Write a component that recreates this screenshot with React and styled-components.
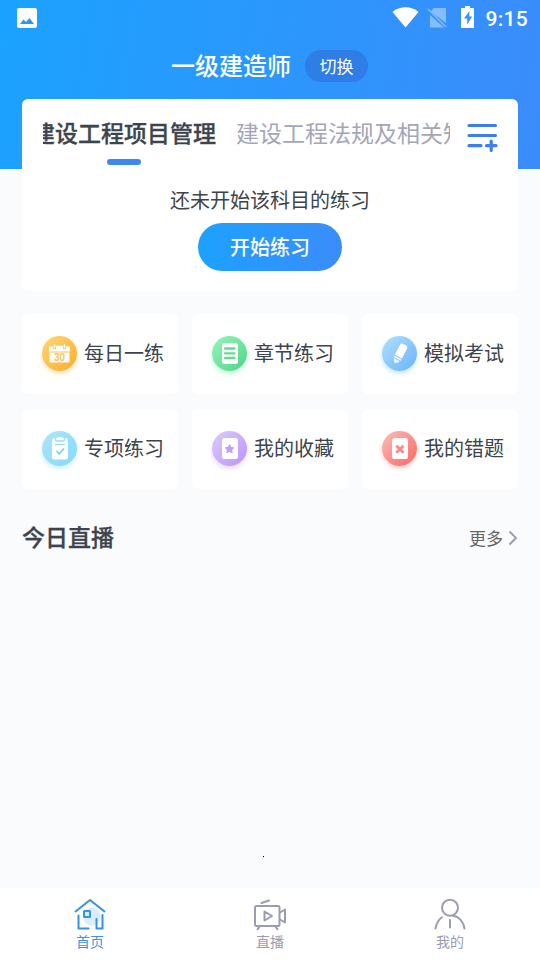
import React from "react";
import styled, { createGlobalStyle } from "styled-components";

const GlobalStyle = createGlobalStyle`
  * {
    box-sizing: border-box;
  }
  body {
    margin: 0;
    font-family: "Noto Sans CJK SC", sans-serif;
    color: #3d444d;
  }
  svg {
    display: block;
    flex-shrink: 0;
  }
`;

const Page = styled.div`
  position: relative;
  display: flex;
  flex-direction: column;
  width: 540px;
  height: 960px;
  overflow: hidden;
  background: linear-gradient(100deg, #1ba2ff 0%, #3b8cfb 100%) 0 0 / 100%
      169px no-repeat,
    #f9fbfd;
`;

const StatusBar = styled.div`
  display: flex;
  align-items: center;
  justify-content: space-between;
  height: 36px;
  padding: 0 12px 0 17px;
`;

const StatusIcons = styled.div`
  display: flex;
  align-items: center;
`;

const Clock = styled.span`
  margin-left: 11px;
  padding-top: 2px;
  font: 500 21px/24px Roboto, sans-serif;
  letter-spacing: 0.3px;
  color: #fff;
`;

const TitleRow = styled.div`
  display: flex;
  align-items: center;
  justify-content: center;
  gap: 14px;
  height: 60px;
  margin-bottom: 3px;
  padding-right: 1px;
`;

const Title = styled.h1`
  margin: 0;
  padding-bottom: 2px;
  font-size: 24px;
  line-height: 32px;
  font-weight: 500;
  color: #fff;
`;

const SwitchButton = styled.button`
  width: 63px;
  height: 32px;
  padding: 0;
  border: 0;
  border-radius: 16px;
  background: #2f7de6;
  font: inherit;
  font-size: 17px;
  line-height: 30px;
  color: #fff;
`;

const SubjectCard = styled.section`
  display: flex;
  flex-direction: column;
  align-items: center;
  height: 192px;
  margin: 0 22px;
  border-radius: 6px;
  background: #fff;
`;

const TabRow = styled.div`
  display: flex;
  align-items: flex-start;
  justify-content: space-between;
  align-self: stretch;
  padding: 16px 20px 0 21px;
`;

const TabScroller = styled.div`
  display: flex;
  gap: 20px;
  width: 407px;
  overflow: hidden;
`;

const Tab = styled.div`
  display: flex;
  flex: none;
  flex-direction: column;
  align-items: center;
  gap: 10px;
  font-size: 23px;
  line-height: 34px;
  font-weight: ${({ $active }) => ($active ? 500 : 400)};
  -webkit-text-stroke: ${({ $active }) => ($active ? "0.3px" : "0")};
  color: ${({ $active }) => ($active ? "#3d444d" : "#a4a6b8")};

  /* the list is scrolled a little to the left */
  &:first-child {
    margin-left: -11px;
  }
  &::after {
    content: "";
    width: 34px;
    height: 6px;
    border-radius: 3px;
    background: ${({ $active }) => ($active ? "#3c8af0" : "transparent")};
  }
`;

const MenuIcon = styled.svg`
  margin-top: 8px;
`;

const Hint = styled.p`
  margin: 20px 0 8px;
  font-size: 20px;
  line-height: 30px;
`;

const StartButton = styled.button`
  width: 144px;
  height: 48px;
  padding: 0;
  border: 0;
  border-radius: 24px;
  background: linear-gradient(100deg, #1ba2ff, #3b8cfb);
  font: inherit;
  font-size: 20px;
  line-height: 46px;
  font-weight: 500;
  color: #fff;
`;

const Grid = styled.div`
  display: grid;
  grid-template-columns: repeat(3, 156px);
  grid-auto-rows: 80px;
  gap: 15px 14px;
  padding: 23px 22px 0;
`;

const GridItem = styled.div`
  display: flex;
  align-items: center;
  gap: 7px;
  padding: 0 0 2px 20px;
  border-radius: 6px;
  background: #fff;
  font-size: 20px;
  line-height: 30px;
  white-space: nowrap;
`;

const GridLabel = styled.span`
  padding-bottom: 1px;
`;

const Bubble = styled.div`
  flex: none;
  width: 35px;
  height: 35px;
  border-radius: 50%;
  background: linear-gradient(
    135deg,
    ${({ $from }) => $from},
    ${({ $to }) => $to}
  );
  box-shadow: 0 3px 5px ${({ $glow }) => $glow};
`;

const SectionHead = styled.div`
  display: flex;
  align-items: center;
  justify-content: space-between;
  padding: 0 22px;
  margin-top: 28px;
`;

const SectionTitle = styled.h2`
  margin: 0;
  font-size: 23px;
  line-height: 38px;
  font-weight: 500;
  -webkit-text-stroke: 0.3px;
`;

const More = styled.div`
  display: flex;
  align-items: center;
  gap: 5px;
  padding-top: 3px;
  font-size: 17px;
  line-height: 26px;
  color: #666;
`;

const Dot = styled.span`
  position: absolute;
  left: 263px;
  top: 856px;
  width: 1px;
  height: 1px;
  background: #000;
`;

const TabBar = styled.nav`
  display: grid;
  grid-template-columns: repeat(3, 1fr);
  height: 72px;
  margin-top: auto;
  background: #fff;
`;

const TabBarItem = styled.div`
  display: flex;
  flex-direction: column;
  align-items: center;
  padding-top: 9px;
  font-size: 14px;
  line-height: 20px;
  color: ${({ $active }) => ($active ? "#3a94e8" : "#9a9cb2")};
`;

const shortcuts = [
  {
    label: "每日一练",
    from: "#ffd777",
    to: "#fbab2c",
    glow: "#ffe7ba",
    icon: (
      <>
        <path
          d="M7 10.500h4V13h3v-2.500h7V13h3v-2.500h4V15.500H7z M7.500 16.500h20V25a1.500 1.500 0 0 1-1.500 1.500H9A1.500 1.500 0 0 1 7.500 25z"
          fill="#fff"
        />
        <path
          d="M12.500 11.500V9M22.500 11.500V9M14.500 10.500h6"
          stroke="#fff"
          strokeWidth="1.500"
          strokeLinecap="round"
        />
        <text
          x="17.500"
          y="25.300"
          textAnchor="middle"
          fontFamily="Liberation Sans, sans-serif"
          fontSize="10"
          fontWeight="700"
          fill="#fdbf5b"
        >
          30
        </text>
      </>
    )
  },
  {
    label: "章节练习",
    from: "#98f5bb",
    to: "#4bd585",
    glow: "#c9f8da",
    icon: (
      <>
        <rect x="10" y="7" width="16" height="21" rx="2.500" fill="#fff" />
        <path
          d="M13 12.500h9.500M13 17.300h9.500M13 22h9.500"
          stroke="#62dc94"
          strokeWidth="2.300"
          strokeLinecap="round"
        />
      </>
    )
  },
  {
    label: "模拟考试",
    from: "#b0e1ff",
    to: "#69b2fa",
    glow: "#cfe7ff",
    icon: (
      <g transform="rotate(27 18 17.500)" fill="#fff">
        <path d="M14 10A2.500 2.500 0 0 1 16.500 7.500h3A2.500 2.500 0 0 1 22 10V21h-8z" />
        <path d="M14 22h8v1.500h-8zM14.500 24.500h7L19 28h-2z" opacity="0.9" />
      </g>
    )
  },
  {
    label: "专项练习",
    from: "#aee6fb",
    to: "#83d9fd",
    glow: "#cff2ff",
    icon: (
      <>
        <rect x="10" y="7" width="16" height="21.500" rx="2.500" fill="#fff" />
        <path
          d="M13.500 7v1.500a1.500 1.500 0 0 0 1.500 1.500h6a1.500 1.500 0 0 0 1.500-1.500V7M13 13.500h10"
          stroke="#9adff9"
          strokeWidth="1.400"
          fill="none"
        />
        <rect x="15" y="6" width="6" height="2.500" rx="1.200" fill="#fff" />
        <path
          d="M14.500 20l2.800 3 4.700-5.500"
          stroke="#7bd2f8"
          strokeWidth="1.800"
          fill="none"
        />
      </>
    )
  },
  {
    label: "我的收藏",
    from: "#dccbff",
    to: "#b894fb",
    glow: "#eadcff",
    icon: (
      <>
        <rect x="10" y="7" width="16" height="21" rx="2.500" fill="#fff" />
        <path
          d="M17.500 13.600l1.300 2.800 3 .4-2.200 2.100.6 3-2.700-1.500-2.700 1.500.6-3-2.200-2.100 3-.4z"
          fill="#bfa0f8"
          stroke="#bfa0f8"
          strokeLinejoin="round"
        />
      </>
    )
  },
  {
    label: "我的错题",
    from: "#ffbcb8",
    to: "#fd6663",
    glow: "#ffd8d6",
    icon: (
      <>
        <rect x="10" y="7" width="16" height="21" rx="2.500" fill="#fff" />
        <path
          d="M14.300 14.800l7.200 7M21.500 14.800l-7.200 7"
          stroke="#f98a87"
          strokeWidth="2.800"
        />
      </>
    )
  }
];

const HomeIcon = () => (
  <svg width="34" height="34" viewBox="0 0 34 34" fill="none">
    <circle cx="19" cy="19.500" r="9" fill="#d8eefd" />
    <g stroke="#3592e6" strokeWidth="2" strokeLinecap="round">
      <path d="M2.500 14.500L17 3l14.500 11.500" strokeLinejoin="round" />
      <path d="M5.500 18.500V31.500H15.500M29.500 18v13.500h-6v-9.500" />
      <rect x="11" y="14" width="6" height="6" rx="0.500" />
    </g>
  </svg>
);

const LiveIcon = () => (
  <svg
    width="34"
    height="34"
    viewBox="0 0 34 34"
    fill="none"
    stroke="#9a9cb2"
    strokeWidth="2"
    strokeLinecap="round"
    strokeLinejoin="round"
  >
    <rect x="2" y="9" width="24.500" height="20" rx="1.500" />
    <path d="M8.500 6l7.500-2.500M6.500 29.500l-2 2.800M22.500 29.500l2 2.800" />
    <path d="M11.500 14.500v9l7.500-4.500z" />
    <path d="M27 15.500l5-3v13l-5-3" />
  </svg>
);

const MineIcon = () => (
  <svg
    width="34"
    height="34"
    viewBox="0 0 34 34"
    fill="none"
    stroke="#9a9cb2"
    strokeWidth="2"
    strokeLinecap="round"
  >
    <circle cx="17" cy="10.700" r="8" />
    <path d="M2.500 31.500C3.500 26.500 5.800 22.500 9 20.300M20 18.700c6.500 1 10.500 6.500 11.500 12.800M17 23v7.500" />
  </svg>
);

const tabBarItems = [
  { label: "首页", Icon: HomeIcon, active: true },
  { label: "直播", Icon: LiveIcon },
  { label: "我的", Icon: MineIcon }
];

const App = () => {
  return (
    <Page>
      <GlobalStyle />
      <StatusBar>
        <svg width="20" height="20" viewBox="0 0 20 20">
          <rect width="20" height="20" rx="2" fill="#fff" />
          <path
            d="M3 16l3.500-4.500L9 14l3.500-4L17 16z"
            fill="#2699f5"
          />
        </svg>
        <StatusIcons>
          <svg width="82" height="24" viewBox="0 0 82 24" fill="#fff">
            <path d="M0.500 6C7.500-.2 19.500-.2 26.500 6L13.500 21.500z" />
            <g opacity="0.400">
              <path d="M42 2h12v15L38.500 5.500z M38 9l14 12.500H38z" />
              <path d="M36 3l18 18" stroke="#fff" strokeWidth="1.500" />
            </g>
            <path d="M73 0h5v2h4.500v20H69V2h4z" />
            <path d="M77.500 5l-5.500 7.500h3.200v6l5-8h-3z" fill="#3492fc" />
          </svg>
          <Clock>9:15</Clock>
        </StatusIcons>
      </StatusBar>

      <TitleRow>
        <Title>一级建造师</Title>
        <SwitchButton>切换</SwitchButton>
      </TitleRow>

      <SubjectCard>
        <TabRow>
          <TabScroller>
            <Tab $active>建设工程项目管理</Tab>
            <Tab>建设工程法规及相关知识</Tab>
          </TabScroller>
          <MenuIcon
            width="32"
            height="30"
            viewBox="0 0 32 30"
            stroke="#3d7fea"
            strokeWidth="3.200"
            strokeLinecap="round"
          >
            <path d="M3 2.500h26.500M3 12.500h26.500M3 22.700h12M20.500 22.700h9.500M25.200 18v9.500" />
          </MenuIcon>
        </TabRow>
        <Hint>还未开始该科目的练习</Hint>
        <StartButton>开始练习</StartButton>
      </SubjectCard>

      <Grid>
        {shortcuts.map(({ label, from, to, glow, icon }) => (
          <GridItem key={label}>
            <Bubble $from={from} $to={to} $glow={glow}>
              <svg width="35" height="35" viewBox="0 0 35 35">
                {icon}
              </svg>
            </Bubble>
            <GridLabel>{label}</GridLabel>
          </GridItem>
        ))}
      </Grid>

      <SectionHead>
        <SectionTitle>今日直播</SectionTitle>
        <More>
          更多
          <svg width="10" height="16" viewBox="0 0 10 16" fill="none">
            <path d="M1.500 1.500L8 8l-6.500 6.500" stroke="#9a9cab" strokeWidth="1.800" />
          </svg>
        </More>
      </SectionHead>

      <Dot />

      <TabBar>
        {tabBarItems.map(({ label, Icon, active }) => (
          <TabBarItem key={label} $active={active}>
            <Icon />
            {label}
          </TabBarItem>
        ))}
      </TabBar>
    </Page>
  );
};

export default App;
